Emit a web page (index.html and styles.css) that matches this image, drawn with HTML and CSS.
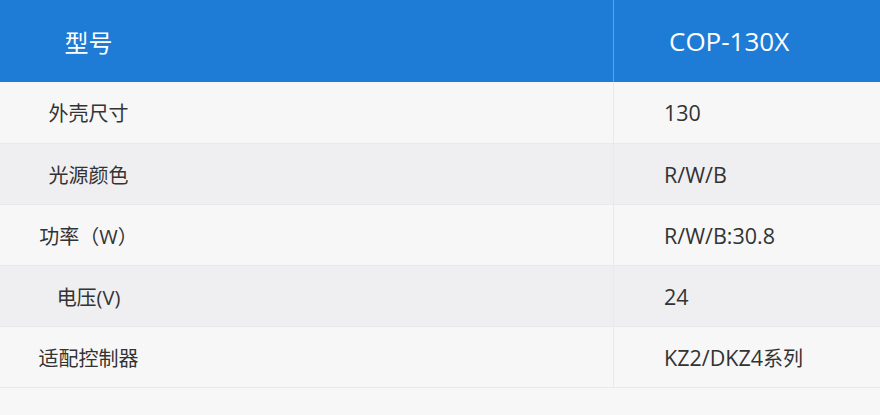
FILE: index.html
```html
<!DOCTYPE html>
<html lang="zh">
<head>
<meta charset="utf-8">
<link rel="stylesheet" href="styles.css">
</head>
<body>
<div class="spec">
  <div class="row head">
    <div class="cell key">型号</div>
    <div class="cell val">COP-130X</div>
  </div>
  <div class="row odd first">
    <div class="cell key">外壳尺寸</div>
    <div class="cell val">130</div>
  </div>
  <div class="row even">
    <div class="cell key">光源颜色</div>
    <div class="cell val">R/W/B</div>
  </div>
  <div class="row odd">
    <div class="cell key">功率（W）</div>
    <div class="cell val">R/W/B:30.8</div>
  </div>
  <div class="row even">
    <div class="cell key">电压(V)</div>
    <div class="cell val">24</div>
  </div>
  <div class="row odd">
    <div class="cell key">适配控制器</div>
    <div class="cell val">KZ2/DKZ4<span class="han">系列</span></div>
  </div>
</div>
</body>
</html>
```

FILE: styles.css
```css
html, body {
  margin: 0;
  padding: 0;
  background: #f7f7f7;
}
body {
  font-family: "Open Sans", "Noto Sans CJK SC", sans-serif;
  color: #333;
}
.spec {
  display: flex;
  flex-direction: column;
}
.row {
  display: grid;
  grid-template-columns: 614px 1fr;
  height: 61px;
  border-bottom: 1px solid #e9e9ea;
  box-sizing: border-box;
}
.row.first { height: 62px; }
.row.odd { background: #f7f7f7; }
.row.even { background: #efeff1; }
.row.head {
  height: 82px;
  background: #1e7bd6;
  color: #fff;
  border-bottom: none;
}
.cell {
  display: flex;
  align-items: center;
  font-size: 20px;
}
.head .cell { font-size: 24px; }
.key {
  justify-content: center;
  padding-right: 436px;
  border-right: 1px solid #e9e9ea;
}
.head .key {
  border-right: 1px solid #5fa3e6;
}
.val {
  padding-left: 50px;
  font-size: 21.5px;
}
.head .val {
  padding-left: 55px;
  font-size: 26px;
}
.han {
  font-family: "Noto Sans CJK SC", sans-serif;
  font-size: 20px;
}
```
